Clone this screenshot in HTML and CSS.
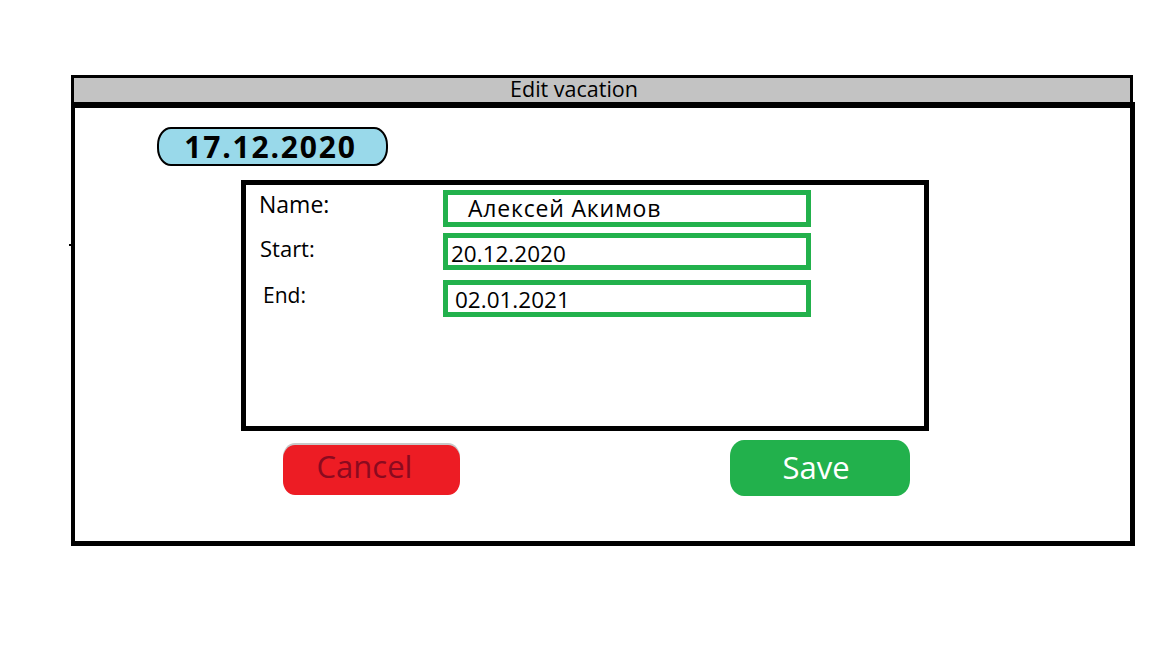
FILE: index.html
```html
<!DOCTYPE html>
<html lang="en">
<head>
<meta charset="utf-8">
<title>Edit vacation</title>
<link rel="stylesheet" href="styles.css">
</head>
<body>
<div class="window">
  <div class="titlebar">Edit vacation</div>
  <div class="panel">
    <div class="date-pill">17.12.2020</div>
    <div class="form-box">
      <div class="row row-name">
        <div class="label label-name">Name:</div>
        <div class="field field-name">Алексей Акимов</div>
      </div>
      <div class="row row-start">
        <div class="label label-start">Start:</div>
        <div class="field field-start">20.12.2020</div>
      </div>
      <div class="row row-end">
        <div class="label label-end">End:</div>
        <div class="field field-end">02.01.2021</div>
      </div>
    </div>
    <div class="actions">
      <div class="btn btn-cancel">Cancel</div>
      <div class="btn btn-save">Save</div>
    </div>
  </div>
</div>
</body>
</html>
```

FILE: styles.css
```css
html, body {
  margin: 0;
  padding: 0;
  background: #ffffff;
}

body {
  font-family: "Open Sans", "Noto Sans", "DejaVu Sans", sans-serif;
  color: #000;
}

.window {
  margin: 75px 0 0 71px;
  width: 1064px;
}

.titlebar {
  box-sizing: border-box;
  width: 1062px;
  height: 27px;
  border: 3px solid #000;
  border-bottom: 0;
  background: #c3c3c3;
  font-size: 21.5px;
  line-height: 21px;
  text-align: center;
  padding-right: 56px;
}

.panel {
  position: relative;
  box-sizing: border-box;
  width: 1064px;
  border-style: solid;
  border-color: #000;
  border-width: 6px 5px 5px 4px;
  padding-bottom: 45px;
}

.panel::before {
  content: "";
  position: absolute;
  left: -6px;
  top: 136px;
  width: 2px;
  height: 2px;
  background: #000;
}

.date-pill {
  box-sizing: border-box;
  margin: 19px 0 0 82px;
  width: 231px;
  height: 39px;
  border: 2px solid #000;
  border-radius: 14px / 18px;
  background: #99d9ea;
  display: flex;
  align-items: center;
  justify-content: center;
  font-weight: 700;
  font-size: 30px;
  line-height: 35px;
  letter-spacing: 1.8px;
  padding-right: 4px;
}

.form-box {
  box-sizing: border-box;
  margin: 14px 0 0 166px;
  width: 688px;
  height: 251px;
  border: 5px solid #000;
  padding: 5px 0 0 13px;
}

.row {
  display: flex;
  align-items: flex-start;
}

.row-start { margin-top: 6px; }
.row-end { margin-top: 10px; }

.label {
  width: 184px;
  flex: none;
}

.label-name {
  font-size: 23px;
  line-height: 23px;
  padding-top: 3px;
}

.label-start {
  font-size: 22px;
  line-height: 22px;
  padding-top: 4px;
  padding-left: 1px;
  width: 183px;
}

.label-end {
  font-size: 21px;
  line-height: 21px;
  padding-top: 5px;
  padding-left: 4px;
  width: 180px;
}

.field {
  box-sizing: border-box;
  width: 368px;
  height: 37px;
  border: 5px solid #22b14c;
  font-size: 22.5px;
  line-height: 27px;
  white-space: nowrap;
}

.field-name {
  font-size: 23px;
  letter-spacing: 0.8px;
  padding: 0 0 0 20px;
}

.field-start {
  padding: 2px 0 0 3px;
}

.field-end {
  padding: 1px 0 0 7px;
}

.actions {
  display: flex;
  align-items: flex-start;
  margin-left: 208px;
}

.btn {
  box-sizing: border-box;
  display: flex;
  align-items: center;
  justify-content: center;
  font-size: 31px;
  line-height: 40px;
}

.btn-cancel {
  margin-top: 14px;
  width: 177px;
  height: 50px;
  background: #ed1c24;
  color: #8b0a1f;
  border-radius: 12px / 14px;
  box-shadow: 0 -2px 0 0 #c8c8c8;
  padding: 0 14px 9px 0;
}

.btn-save {
  margin-top: 9px;
  margin-left: 270px;
  width: 180px;
  height: 56px;
  background: #22b14c;
  color: #ffffff;
  border-radius: 14px / 16px;
  padding: 0 8px 3px 0;
}
```
